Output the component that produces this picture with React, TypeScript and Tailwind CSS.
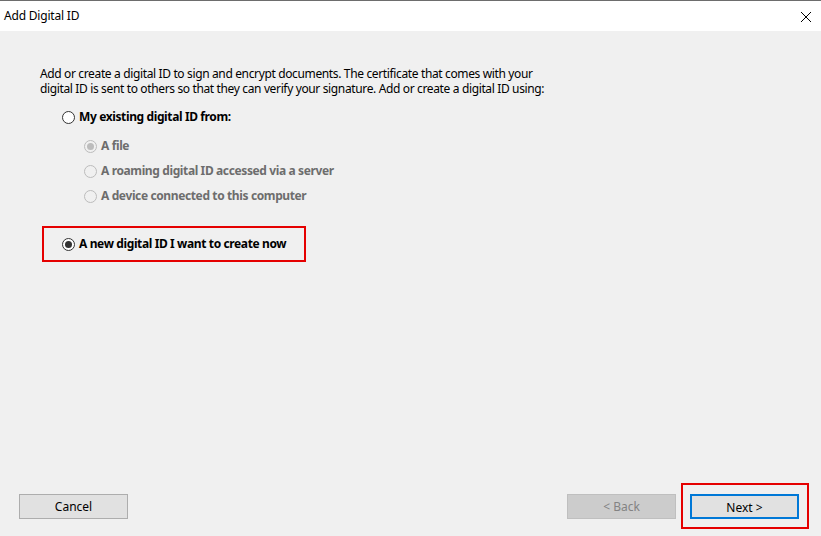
import React from 'react'

const font = { fontFamily: '"Noto Sans", "Open Sans", sans-serif' }

function Radio({ checked = false, disabled = false }: { checked?: boolean; disabled?: boolean }) {
  return (
    <span
      className={`flex h-[13px] w-[13px] shrink-0 items-center justify-center rounded-full border ${
        disabled ? 'border-[#bcbcbc] bg-[#f0f0f0]' : 'border-[#333333] bg-white'
      }`}
    >
      {checked && (
        <span className={`h-[7px] w-[7px] rounded-full ${disabled ? 'bg-[#bcbcbc]' : 'bg-[#333333]'}`} />
      )}
    </span>
  )
}

function Option({
  label,
  checked,
  disabled,
}: {
  label: string
  checked?: boolean
  disabled?: boolean
}) {
  return (
    <div className="flex h-[20px] items-center gap-[4px]">
      <Radio checked={checked} disabled={disabled} />
      <span className={`font-bold tracking-[-0.38px] ${disabled ? 'text-[#6d6d6d]' : 'text-black'}`}>{label}</span>
    </div>
  )
}

export default function App() {
  return (
    <div
      className="flex h-[536px] w-[821px] flex-col overflow-hidden border-t border-[#6d6d6d] bg-[#f0f0f0] text-[12px] text-black"
      style={font}
    >
      <div className="flex h-[30px] shrink-0 items-center justify-between bg-white pl-[4px] pr-[9px]">
        <span className="text-[12px] tracking-[-0.2px]">Add Digital ID</span>
        <svg width="12" height="12" viewBox="0 0 12 12" className="mt-[1px]">
          <path d="M1 1 L11 11 M11 1 L1 11" stroke="#000" strokeWidth="1" />
        </svg>
      </div>

      <div className="flex-1 px-[40px] pt-[35px]">
        <p className="leading-[15px] tracking-[-0.36px]">
          Add or create a digital ID to sign and encrypt documents. The certificate that comes with your
          <br />
          digital ID is sent to others so that they can verify your signature. Add or create a digital ID using:
        </p>

        <div className="ml-[22px] mt-[11px]">
          <Option label="My existing digital ID from:" />
          <div className="ml-[22px] mt-[9px] flex flex-col gap-[5px]">
            <Option label="A file" checked disabled />
            <Option label="A roaming digital ID accessed via a server" disabled />
            <Option label="A device connected to this computer" disabled />
          </div>
        </div>

        <div className="ml-[2px] mt-[20px] w-[264px] border-2 border-[#e50000] py-[6px] pl-[18px]">
          <Option label="A new digital ID I want to create now" checked />
        </div>
      </div>

      <div className="flex shrink-0 items-center justify-between pb-[7px] pl-[19px] pr-[12px]">
        <button className="h-[25px] w-[109px] border border-[#adadad] bg-[#e1e1e1] pt-[2px] text-[12px]">
          Cancel
        </button>
        <div className="flex items-center gap-[5px]">
          <button className="h-[25px] w-[109px] border border-[#bfbfbf] bg-[#cccccc] pt-[2px] text-[12px] text-[#838383]">
            &lt; Back
          </button>
          <div className="border-2 border-[#e50000] pb-[8px] pl-[7px] pr-[8px] pt-[9px]">
            <button className="h-[25px] w-[109px] border-2 border-[#0078d7] bg-[#e1e1e1] pt-[2px] text-[12px]">
              Next &gt;
            </button>
          </div>
        </div>
      </div>
    </div>
  )
}
